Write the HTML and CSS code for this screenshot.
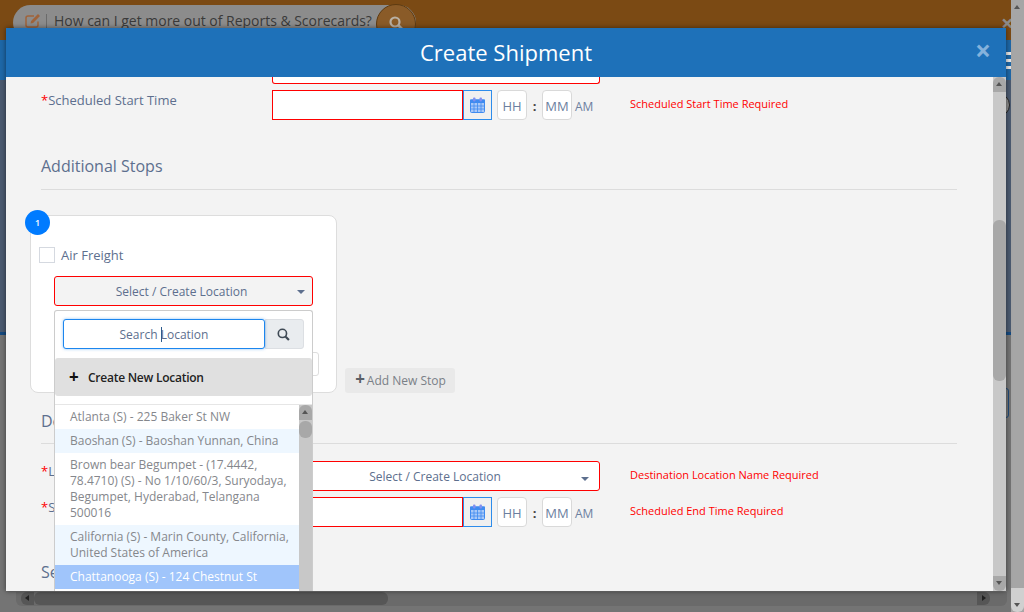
FILE: index.html
```html
<!DOCTYPE html>
<html lang="en">
<head>
  <meta charset="UTF-8" />
  <meta name="viewport" content="width=device-width, initial-scale=1.0"/>
  <title>Create Shipment</title>
  <link rel="stylesheet" href="styles.css">
</head>
<body>
  <!-- dimmed page behind the modal -->
  <div class="backdrop">
    <div class="top-band">
      <div class="help-pill">
        <svg class="edit-icon" width="17" height="15" viewBox="0 0 17 15"><path d="M13 8.5V12a2 2 0 0 1-2 2H3a2 2 0 0 1-2-2V5a2 2 0 0 1 2-2h6" fill="none" stroke="#a0633a" stroke-width="1.5"/><path d="M5.5 10.5l.6-2.6L13 1l2 2-6.900 6.900z" fill="#a0633a"/></svg>
        <span class="pill-sep"></span>
        <span class="pill-text">How can I get more out of Reports &amp; Scorecards?</span>
        <span class="pill-search">
          <svg width="16" height="16" viewBox="0 0 16 16"><circle cx="7" cy="7" r="4.500" fill="none" stroke="#b9b0a4" stroke-width="2.200"/><path d="M10.500 10.500L14.500 14.500" stroke="#b9b0a4" stroke-width="2.600"/></svg>
        </span>
      </div>
      <span class="band-close">&times;</span>
    </div>
    <div class="side-blue"></div>
    <div class="side-grey"></div>
    <div class="hamburger"><i></i><i></i><i></i></div>
    <span class="side-arc"></span>
    <span class="side-outline"></span>
  </div>

  <div class="page-scroll">
    <span class="arrow up"></span>
    <span class="page-thumb"></span>
    <span class="arrow down"></span>
  </div>
  <div class="page-hscroll">
    <span class="arrow left"></span>
    <span class="hthumb"></span>
    <span class="arrow right"></span>
  </div>

  <div class="modal">
    <div class="modal-header">
      <h1>Create Shipment</h1>
      <span class="modal-close">&times;</span>
    </div>
    <div class="modal-main">
      <div class="modal-body">
        <div class="clipped-select"></div>

        <div class="form-row start-row">
          <label class="field-label"><span class="req">*</span>Scheduled Start Time</label>
          <div class="date-group">
            <div class="date-input"></div>
            <div class="cal-btn">
              <svg width="15" height="16" viewBox="0 0 15 16"><use href="#cal"/></svg>
            </div>
            <div class="time-box">HH</div>
            <span class="time-colon">:</span>
            <div class="time-box">MM</div>
            <span class="ampm">AM</span>
          </div>
          <span class="error">Scheduled Start Time Required</span>
        </div>

        <h2 class="section-title stops-title">Additional Stops</h2>

        <div class="stops-row">
          <div class="stop-card">
            <span class="badge">1</span>
            <label class="air-row"><span class="checkbox"></span>Air Freight</label>
            <div class="select-btn">Select / Create Location<span class="caret"></span></div>
            <div class="hidden-box"></div>
          </div>
          <div class="add-stop"><span class="plus">+</span>Add New Stop</div>
        </div>

        <!-- the rest of these labels sits behind the open dropdown -->
        <h2 class="section-title dest-title">De</h2>

        <div class="form-row loc-row">
          <label class="field-label"><span class="req">*</span>L</label>
          <div class="dest-select">Select / Create Location<span class="caret"></span></div>
          <span class="error">Destination Location Name Required</span>
        </div>

        <div class="form-row end-row">
          <label class="field-label"><span class="req">*</span>S</label>
          <div class="date-group">
            <div class="date-input"></div>
            <div class="cal-btn">
              <svg width="15" height="16" viewBox="0 0 15 16"><use href="#cal"/></svg>
            </div>
            <div class="time-box">HH</div>
            <span class="time-colon">:</span>
            <div class="time-box">MM</div>
            <span class="ampm">AM</span>
          </div>
          <span class="error">Scheduled End Time Required</span>
        </div>

        <h2 class="section-title last-title">Se</h2>

        <!-- open location dropdown -->
        <div class="dropdown">
          <div class="search-row">
            <div class="search-input">Search <span class="cursor"></span>Location</div>
            <div class="search-btn">
              <svg width="13" height="13" viewBox="0 0 12 12"><circle cx="5" cy="5" r="3.800" fill="none" stroke="#3f4a55" stroke-width="1.500"/><path d="M8 8l3 3" stroke="#3f4a55" stroke-width="2"/></svg>
            </div>
          </div>
          <div class="create-new"><span class="create-plus">+</span>Create New Location</div>
          <div class="list-wrap">
            <ul class="loc-list">
              <li>Atlanta (S) - 225 Baker St NW</li>
              <li class="alt">Baoshan (S) - Baoshan Yunnan, China</li>
              <li>Brown bear Begumpet - (17.4442, 78.4710) (S) - No 1/10/60/3, Suryodaya, Begumpet, Hyderabad, Telangana 500016</li>
              <li class="alt">California (S) - Marin County, California, United States of America</li>
              <li class="active">Chattanooga (S) - 124 Chestnut St</li>
            </ul>
            <div class="list-scroll">
              <span class="arrow up"></span>
              <span class="list-thumb"></span>
            </div>
          </div>
        </div>
      </div>
      <div class="body-scroll">
        <span class="arrow up"></span>
        <span class="body-thumb"></span>
        <span class="arrow down"></span>
      </div>
    </div>
  </div>

  <svg class="defs" width="0" height="0">
    <symbol id="cal" viewBox="0 0 15 16">
      <rect x="0.500" y="3" width="14" height="12.500" rx="1" fill="#a9c9f8" stroke="#3f8bf0"/>
      <rect x="0" y="2.500" width="15" height="3.500" fill="#3f8bf0"/>
      <rect x="3" y="0.500" width="2.500" height="4" rx="1" fill="#7f8ff0"/>
      <rect x="9.500" y="0.500" width="2.500" height="4" rx="1" fill="#7f8ff0"/>
      <path d="M4 6v9M7.500 6v9M11 6v9M1 9h13M1 12h13" stroke="#3f8bf0" stroke-width="0.800"/>
    </symbol>
  </svg>
</body>
</html>
```

FILE: styles.css
```css
* {
  box-sizing: border-box;
}

html, body {
  margin: 0;
  padding: 0;
  height: 100%;
  overflow: hidden;
}

body {
  font-family: "Open Sans", sans-serif;
  background: #747474;
  color: #5d6f8e;
  position: relative;
}

/* backdrop */
.backdrop {
  position: absolute;
  inset: 0;
}

.top-band {
  height: 40px;
  background: #7b4a14;
  padding: 5px 0 0 13px;
}

.help-pill {
  width: 403px;
  height: 35px;
  background: #8c8c8c;
  border-radius: 18px;
  display: flex;
  align-items: flex-start;
  padding: 8px 0 0 12px;
  color: #3a3a3a;
  font-size: 14px;
  position: relative;
}

.edit-icon {
  flex: none;
}

.pill-sep {
  width: 1px;
  height: 14px;
  background: #6b6b6b;
  margin: 1px 7px 0 4px;
}

.pill-text {
  line-height: 16px;
  white-space: nowrap;
  letter-spacing: -0.02px;
}

.pill-search {
  position: absolute;
  left: 363px;
  top: -1px;
  width: 40px;
  height: 40px;
  border-radius: 50%;
  background: #8a5b28;
  border: 1px solid #5e3a10;
  display: flex;
  justify-content: center;
  padding-top: 10px;
}

.band-close {
  position: absolute;
  left: 1001px;
  top: 11px;
  color: #8c8c8c;
  font-size: 22px;
  line-height: 22px;
  font-weight: 700;
}

.side-blue {
  position: absolute;
  top: 40px;
  left: 0;
  right: 0;
  height: 40px;
  background: #1e68a8;
}

.side-grey {
  position: absolute;
  top: 80px;
  left: 0;
  right: 0;
  height: 255px;
  background: #4b5a70;
  border-bottom: 3px solid #154a80;
}

.hamburger {
  position: absolute;
  left: 1006px;
  top: 52px;
  width: 5px;
}

.hamburger i {
  display: block;
  height: 3px;
  margin-bottom: 4px;
  background: #e8e8e8;
}

.side-arc {
  position: absolute;
  left: 986px;
  top: 93px;
  width: 24px;
  height: 24px;
  border-radius: 50%;
  background: #8c8c8c;
  border: 1px solid #222;
}

.side-outline {
  position: absolute;
  left: 1000px;
  top: 388px;
  width: 9px;
  height: 30px;
  border: 1px solid #1f4a78;
  border-radius: 3px;
}

/* modal */
.modal {
  position: absolute;
  left: 6px;
  top: 28px;
  width: 1000px;
  height: 563px;
  background: #f3f3f3;
  box-shadow: 0 0 5px rgba(0, 0, 0, 0.5);
  display: flex;
  flex-direction: column;
}

.modal-header {
  height: 49px;
  flex: none;
  background: #1e71b9;
  display: flex;
  align-items: center;
  justify-content: center;
  position: relative;
}

.modal-header h1 {
  margin: 0 0 1px 0;
  font-size: 22px;
  line-height: 30px;
  font-weight: 400;
  color: #fff;
}

.modal-close {
  position: absolute;
  right: 15px;
  top: 7px;
  font-size: 28px;
  line-height: 30px;
  font-weight: 700;
  color: #84b2dc;
}

.modal-main {
  flex: 1;
  display: flex;
  min-height: 0;
}

.modal-body {
  flex: 1;
  position: relative;
  overflow: hidden;
  padding: 0 36px 0 35px;
}

.clipped-select {
  width: 328px;
  height: 7px;
  margin-left: 231px;
  background: #fff;
  border: 1px solid #f00;
  border-top: none;
  border-radius: 0 0 3px 3px;
}

.form-row {
  display: flex;
  align-items: flex-start;
  height: 30px;
}

.start-row {
  margin-top: 6px;
}

.field-label {
  width: 231px;
  flex: none;
  font-size: 13px;
  line-height: 20px;
  color: #5d6f8e;
}

.req {
  color: #f00;
}

.date-group {
  display: flex;
  width: 358px;
  height: 30px;
  flex: none;
}

.date-input {
  width: 191px;
  height: 30px;
  background: #fff;
  border: 1px solid #f00;
}

.cal-btn {
  width: 29px;
  height: 30px;
  border: 1px solid #2d8ceb;
  background: #f0f0f0;
  display: flex;
  align-items: center;
  justify-content: center;
}

.time-box {
  width: 30px;
  height: 30px;
  margin-left: 5px;
  background: #fff;
  border: 1px solid #d9d9d9;
  border-radius: 4px;
  font-size: 13px;
  line-height: 30px;
  text-align: center;
  color: #6c7fa0;
}

.time-colon {
  width: 15px;
  margin-right: -5px;
  text-align: center;
  font-size: 13px;
  font-weight: 700;
  line-height: 33px;
  color: #444;
}

.ampm {
  margin-left: 3px;
  font-size: 12px;
  line-height: 33px;
  color: #6c7fa0;
}

.error {
  font-size: 11px;
  line-height: 16px;
  margin-top: 6px;
  color: #f00;
  white-space: nowrap;
}

.section-title {
  margin: 0;
  font-size: 16px;
  line-height: 22px;
  font-weight: 400;
  color: #5d6f8e;
  border-bottom: 1px solid #dcdcdc;
}

.stops-title {
  margin-top: 35px;
  height: 35px;
}

.stops-row {
  display: flex;
  align-items: flex-end;
  margin: 25px 0 0 -11px;
}

.stop-card {
  width: 307px;
  height: 178px;
  background: #fff;
  border: 1px solid #ddd;
  border-radius: 8px;
  position: relative;
  padding: 31px 8px 0 8px;
}

.badge {
  position: absolute;
  left: -6px;
  top: -6px;
  width: 25px;
  height: 25px;
  border-radius: 50%;
  background: #007bff;
  color: #fff;
  font-size: 9px;
  font-weight: 600;
  line-height: 25px;
  text-align: center;
}

.air-row {
  display: flex;
  align-items: center;
  font-size: 13px;
  line-height: 16px;
  color: #5d6f8e;
}

.checkbox {
  width: 16px;
  height: 16px;
  margin-right: 6px;
  background: #fff;
  border: 1px solid #d5d9e0;
}

.select-btn {
  width: 259px;
  height: 30px;
  margin: 13px 0 0 15px;
  border: 1px solid #f00;
  border-radius: 3px;
  background: #f3f3f3;
  font-size: 12px;
  line-height: 29px;
  text-align: center;
  padding-right: 4px;
  position: relative;
}

.caret {
  position: absolute;
  right: 7px;
  top: 13px;
  border: 4px solid transparent;
  border-top-color: #5d6f8e;
  border-bottom: none;
}

.hidden-box {
  position: absolute;
  left: 270px;
  top: 136px;
  width: 18px;
  height: 24px;
  border: 1px solid #ddd;
  border-radius: 3px;
  background: #fff;
}

.add-stop {
  width: 110px;
  height: 25px;
  margin-left: 8px;
  padding-left: 1px;
  background: #e9e9e9;
  border-radius: 3px;
  font-size: 12px;
  line-height: 25px;
  text-align: center;
  color: #7a8087;
}

.plus {
  font-size: 17px;
  font-weight: 700;
  color: #5a5f66;
  margin-right: 2px;
  line-height: 20px;
}

.dest-title {
  margin-top: 17px;
  height: 34px;
}

.loc-row {
  margin-top: 17px;
  height: 36px;
}

.dest-select {
  width: 328px;
  height: 30px;
  flex: none;
  margin-right: 30px;
  background: #fff;
  border: 1px solid #f00;
  border-radius: 3px;
  font-size: 12px;
  line-height: 29px;
  text-align: center;
  padding-right: 2px;
  position: relative;
}

.dest-select .caret {
  right: 10px;
  top: 15px;
}

.last-title {
  margin-top: 34px;
  border-bottom: none;
}

/* dropdown */
.dropdown {
  position: absolute;
  left: 48px;
  top: 233px;
  width: 259px;
  height: 300px;
  background: #fff;
  border: 1px solid #ccc;
  border-bottom: none;
  border-radius: 3px 3px 0 0;
}

.search-row {
  display: flex;
  padding: 8px 8px 0 8px;
}

.search-input {
  width: 202px;
  height: 30px;
  background: #fff;
  border: 1px solid #1c86ee;
  border-radius: 3px;
  box-shadow: 0 0 3px rgba(28, 134, 238, 0.5);
  font-size: 12px;
  line-height: 30px;
  text-align: center;
  position: relative;
  z-index: 1;
}

.cursor {
  display: inline-block;
  width: 1px;
  height: 15px;
  margin-right: -1px;
  vertical-align: -3px;
  background: #2c5a8c;
}

.search-btn {
  width: 39px;
  height: 30px;
  padding-right: 3px;
  background: #e9ecef;
  border: 1px solid #dcdfe3;
  border-radius: 0 3px 3px 0;
  display: flex;
  align-items: center;
  justify-content: center;
}

.create-new {
  height: 38px;
  margin-top: 9px;
  padding-left: 14px;
  background: #e0e0e0;
  border-radius: 3px;
  font-size: 12px;
  font-weight: 600;
  line-height: 37px;
  letter-spacing: -0.25px;
  color: #222;
}

.create-plus {
  display: inline-block;
  width: 19px;
  font-size: 17px;
  font-weight: 700;
  color: #111;
  vertical-align: -1px;
}

.list-wrap {
  display: flex;
  margin-top: 8px;
  border-top: 1px solid #e6e6e6;
  height: 187px;
  overflow: hidden;
}

.loc-list {
  width: 244px;
  flex: none;
  margin: 0;
  padding: 0;
  list-style: none;
  font-size: 12px;
  line-height: 16px;
  color: #85878c;
}

.loc-list li {
  padding: 4px 8px 4px 15px;
}

.loc-list .alt {
  background: #eef7ff;
}

.loc-list .active {
  background: #a0c5fb;
  color: #fff;
}

.list-scroll {
  width: 13px;
  background: #c8c8c8;
  position: relative;
}

.list-thumb {
  display: block;
  height: 17px;
  margin-top: 1px;
  background: #a8a8a8;
  border-radius: 6px;
}

/* scrollbars */
.arrow {
  display: block;
  width: 13px;
  height: 15px;
  background: #a8a8a8;
  position: relative;
  flex: none;
}

.arrow::after {
  content: "";
  position: absolute;
  left: 3px;
  top: 5px;
  border: 3.500px solid transparent;
  border-top: none;
  border-bottom: 4px solid #555;
}

.arrow.up {
  border-radius: 6px 6px 0 0;
}

.arrow.down {
  border-radius: 0 0 6px 6px;
}

.arrow.down::after {
  border-bottom: none;
  border-top: 4px solid #555;
}

.body-scroll {
  width: 13px;
  flex: none;
  background: #c8c8c8;
  display: flex;
  flex-direction: column;
}

.body-thumb {
  height: 161px;
  margin-top: 128px;
  margin-bottom: auto;
  background: #a8a8a8;
  border-radius: 6px;
}

.page-scroll {
  position: absolute;
  left: 1011px;
  top: 0;
  width: 13px;
  height: 612px;
  background: #a6a6a6;
  display: flex;
  flex-direction: column;
}

.page-thumb {
  flex: 1;
  margin-bottom: 0;
  background: #a6a6a6;
  border-radius: 6px;
}

.page-scroll .arrow {
  background: #a6a6a6;
}

.page-scroll .arrow.down {
  height: 24px;
  background: #d0d0d0;
}

.page-scroll .arrow.down::after {
  top: 15px;
}

.page-hscroll {
  position: absolute;
  left: 16px;
  top: 592px;
  width: 991px;
  height: 14px;
  background: #6a6a6a;
  border-radius: 0 0 6px 6px;
  display: flex;
}

.hthumb {
  width: 354px;
  height: 13px;
  margin-right: auto;
  background: #565656;
  border-radius: 6px;
}

.page-hscroll .arrow {
  height: 13px;
  background: #565656;
}

.page-hscroll .arrow.left {
  margin-left: 5px;
  border-radius: 6px 0 0 6px;
}

.page-hscroll .arrow.right {
  margin-right: 17px;
  border-radius: 0 6px 6px 0;
}

.page-hscroll .arrow.left::after {
  left: 4px;
  top: 3px;
  border: 3.500px solid transparent;
  border-left: none;
  border-right: 4px solid #222;
}

.page-hscroll .arrow.right::after {
  left: 5px;
  top: 3px;
  border: 3.500px solid transparent;
  border-right: none;
  border-left: 4px solid #222;
}

.defs {
  position: absolute;
}
```
